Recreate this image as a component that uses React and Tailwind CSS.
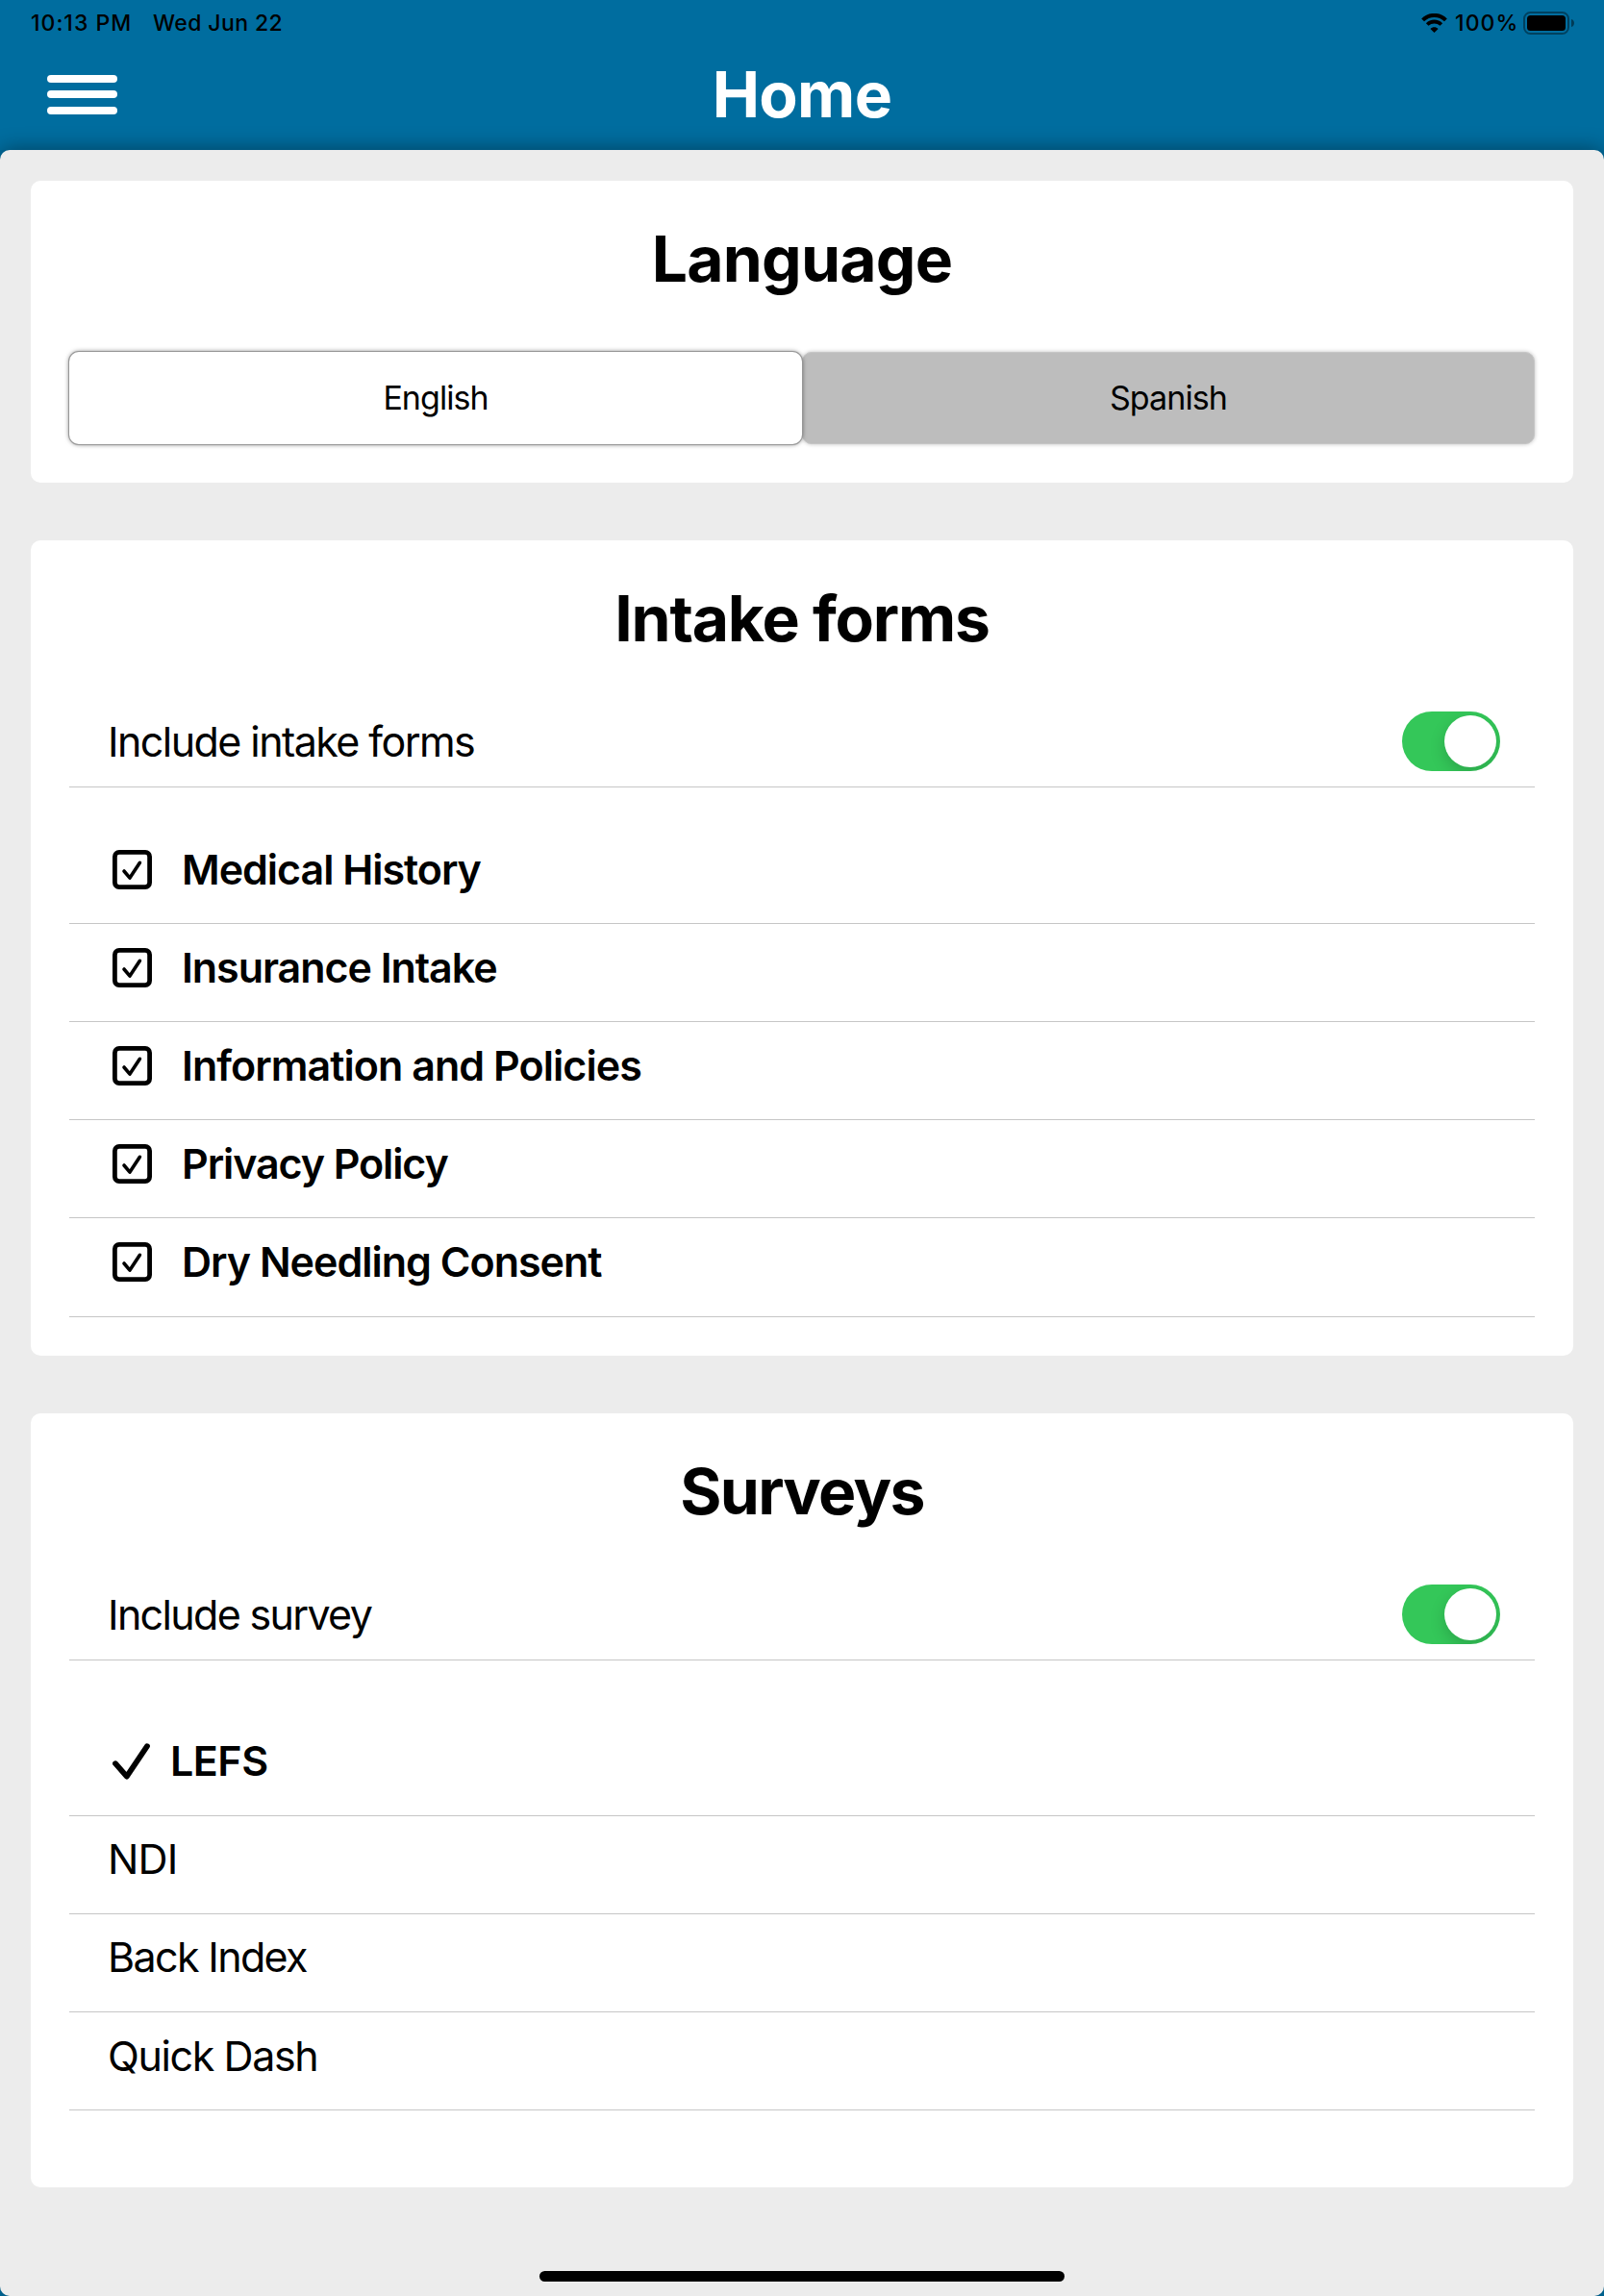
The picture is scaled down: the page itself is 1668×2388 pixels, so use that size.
import React from "react";

const intakeForms = [
  { label: "Medical History", tracking: "tracking-[-1.03px]" },
  { label: "Insurance Intake", tracking: "tracking-[-1.05px]" },
  { label: "Information and Policies", tracking: "tracking-[-0.96px]" },
  { label: "Privacy Policy", tracking: "tracking-[-1.1px]" },
  { label: "Dry Needling Consent", tracking: "tracking-[-1px]" },
];

const surveys = [
  { label: "LEFS", tracking: "tracking-[-0.5px]", selected: true },
  { label: "NDI", tracking: "tracking-[-0.9px]" },
  { label: "Back Index", tracking: "tracking-[-1.65px]" },
  { label: "Quick Dash", tracking: "tracking-[-1.4px]" },
];

function StatusBar() {
  return (
    <div className="flex h-[47px] items-center pr-[30px] pl-8 text-[23px] leading-none font-medium text-black">
      <span className="mt-0.5 w-[127px] tracking-[1px] whitespace-nowrap">10:13 PM</span>
      <span className="mt-0.5 tracking-[0.4px] whitespace-nowrap">Wed Jun 22</span>
      <svg className="mt-px ml-auto h-5 w-[27px]" viewBox="0 0 27 20" fill="none">
        <path d="M1.6 6.9 C8.2 0.2 18.8 0.2 25.4 6.9" stroke="black" strokeWidth="4" />
        <path d="M6.2 11.5 C10.3 7.5 16.7 7.5 20.8 11.5" stroke="black" strokeWidth="3.8" />
        <path d="M13.5 20 L9.4 15.9 C11.7 13.7 15.3 13.7 17.6 15.9 Z" fill="black" />
      </svg>
      <span className="mt-0.5 ml-2 w-[71px] tracking-[1.1px]">100%</span>
      <svg className="mt-px h-6 w-[54px]" viewBox="0 0 54 24" fill="none">
        <rect x="1" y="1" width="46" height="22" rx="6.5" stroke="black" strokeOpacity="0.4" strokeWidth="2" />
        <rect x="4" y="4" width="40" height="16" rx="3.5" fill="black" />
        <path d="M50 8 C54 9 54 15 50 16 Z" fill="black" fillOpacity="0.45" />
      </svg>
    </div>
  );
}

function Header() {
  return (
    <header className="mb-[7px] grid h-[102px] grid-cols-[1fr_auto_1fr] items-center px-[49px]">
      <button className="flex h-[41px] w-[73px] flex-col justify-between" aria-label="Menu">
        <span className="h-2 w-full rounded-full bg-white" />
        <span className="h-2 w-full rounded-full bg-white" />
        <span className="h-2 w-full rounded-full bg-white" />
      </button>
      <h1 className="text-[66px] leading-none font-bold tracking-[-0.7px] text-white">Home</h1>
    </header>
  );
}

function Card({ title, tracking, className, children }) {
  return (
    <section className={`rounded-[10px] bg-white px-10 ${className}`}>
      <h2 className={`flex h-[162px] items-center justify-center text-[66px] leading-none font-bold ${tracking}`}>
        {title}
      </h2>
      {children}
    </section>
  );
}

function ToggleRow({ label, tracking }) {
  return (
    <div className="flex h-[95px] items-center justify-between border-b border-[#c6c6c6] pr-9 pl-10">
      <span className={tracking}>{label}</span>
      <span className="flex h-[62px] w-[102px] items-center justify-end overflow-hidden rounded-full bg-[#34c759] pr-1">
        <span className="size-[54px] rounded-full bg-white shadow-[0_6px_16px_rgba(0,0,0,0.17)]" />
      </span>
    </div>
  );
}

function CheckboxIcon() {
  return (
    <svg className="mr-[31px] ml-[5px] h-[41px] w-[41px]" viewBox="0 0 41 41" fill="none" stroke="black">
      <rect x="2.4" y="2.4" width="36.2" height="36.2" rx="4.5" strokeWidth="4.8" />
      <path d="M12 22 L18 29.1 L28.4 13.3" strokeWidth="3.6" strokeLinecap="round" strokeLinejoin="round" />
    </svg>
  );
}

function CheckIcon() {
  return (
    <svg className="mr-5 ml-[5px] h-10 w-10" viewBox="0 0 40 40" fill="none" stroke="black">
      <path d="M3 22.2 L14.8 35.6 L36 4.2" strokeWidth="5.8" strokeLinecap="round" strokeLinejoin="round" />
    </svg>
  );
}

export default function App() {
  return (
    <div className="flex h-[2388px] w-[1668px] flex-col overflow-hidden bg-[#006d9f] font-['Inter',sans-serif] text-black">
      <StatusBar />
      <Header />
      <main className="flex flex-1 flex-col rounded-[10px] bg-[#ececec] px-8 pt-8 shadow-[0_0_22px_rgba(0,0,0,0.42)]">
        <Card title="Language" tracking="tracking-[-0.8px]" className="mb-[60px] h-[314px]">
          <div className="mt-4 grid h-24 grid-cols-2 text-[34px] leading-none">
            <button className="z-10 rounded-[10px] bg-white tracking-[-0.95px] shadow-[0_0_0_1px_#979797,0_0_5px_rgba(0,0,0,0.6)]">
              English
            </button>
            <button className="rounded-[10px] border border-[#c6c6c6] bg-[#bdbdbd] tracking-[-0.9px] shadow-[0_0_4px_rgba(0,0,0,0.25)]">
              Spanish
            </button>
          </div>
        </Card>

        <Card title="Intake forms" tracking="tracking-[-1.2px]" className="mb-[60px] h-[848px] text-[43px] leading-none">
          <ToggleRow label="Include intake forms" tracking="tracking-[-1.57px]" />
          <ul className="mt-10">
            {intakeForms.map((f) => (
              <li
                key={f.label}
                className="flex h-[102px] items-center border-b border-[#c6c6c6] pb-2.5 pl-10 font-semibold last:h-[103px] last:pb-[11px]"
              >
                <CheckboxIcon />
                <span className={f.tracking}>{f.label}</span>
              </li>
            ))}
          </ul>
        </Card>

        <Card title="Surveys" tracking="tracking-[-1.7px]" className="h-[805px] text-[43px] leading-none">
          <ToggleRow label="Include survey" tracking="tracking-[-1.67px]" />
          <ul className="mt-[60px]">
            {surveys.map((s) => (
              <li
                key={s.label}
                className={`flex h-[102px] items-center border-b border-[#c6c6c6] pb-3 pl-10 last:pb-2.5 ${s.selected ? "font-semibold" : ""}`}
              >
                {s.selected && <CheckIcon />}
                <span className={s.tracking}>{s.label}</span>
              </li>
            ))}
          </ul>
        </Card>

        <div className="mt-auto mb-[15px] h-[11px] w-[546px] self-center rounded-full bg-black" />
      </main>
    </div>
  );
}
